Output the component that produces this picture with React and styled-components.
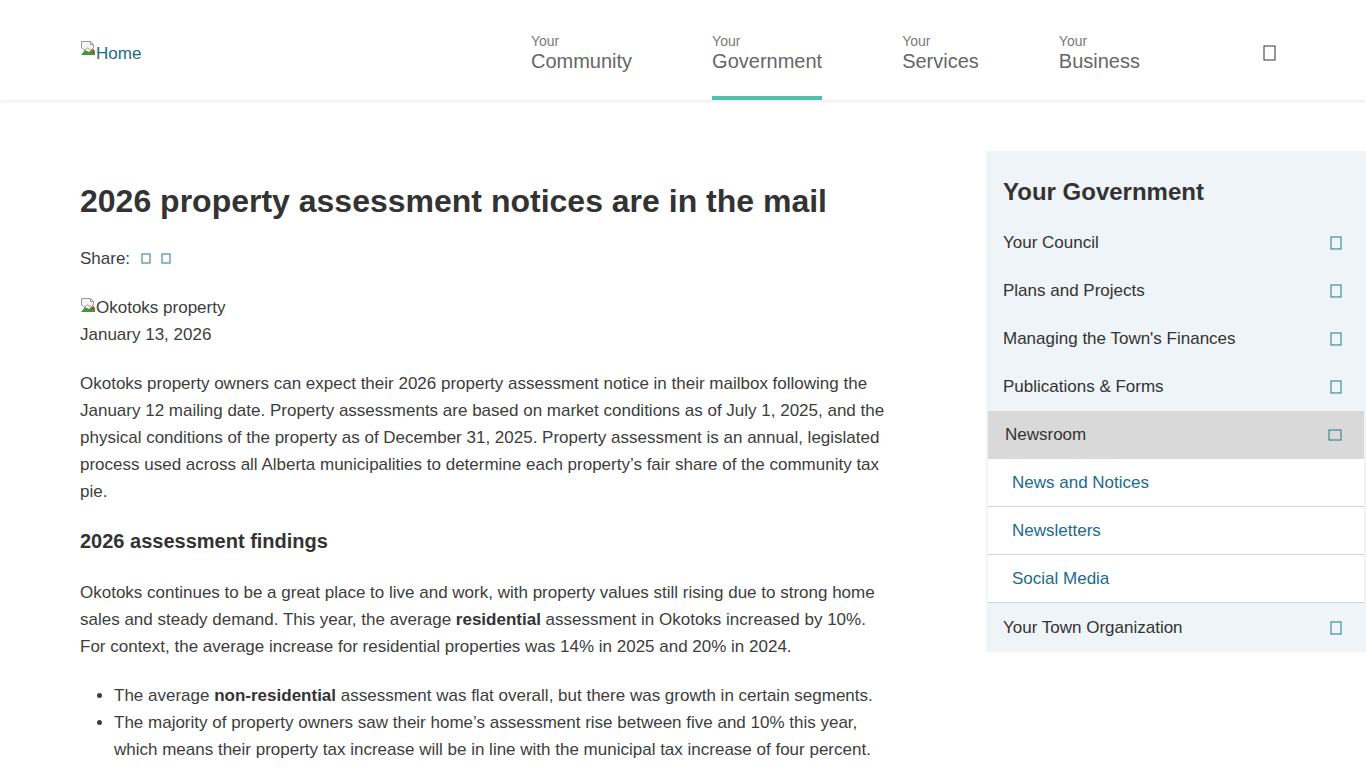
import React from "react";
import styled, { createGlobalStyle } from "styled-components";

const GlobalStyle = createGlobalStyle`
  body {
    margin: 0;
    background: #fff;
    font-family: "Liberation Sans", Arial, sans-serif;
    color: #3d3d3d;
  }
`;

const Header = styled.header`
  height: 100px;
  display: flex;
  align-items: stretch;
  justify-content: space-between;
  padding: 0 90px 0 80px;
  background: #fff;
  box-shadow: 0 2px 3px rgba(0, 0, 0, 0.07);
  position: relative;
  z-index: 1;
`;

const Logo = styled.a`
  display: flex;
  align-items: flex-end;
  align-self: flex-start;
  margin-top: 40px;
  color: #1c6b8c;
  font-size: 17px;
  line-height: 19px;
  text-decoration: none;
  svg {
    margin-bottom: 7px;
  }
`;

const Nav = styled.nav`
  display: flex;
  align-items: stretch;
`;

const NavList = styled.div`
  display: flex;
  gap: 80px;
  margin-right: 123px;
`;

const NavItem = styled.a`
  display: flex;
  flex-direction: column;
  padding-top: 33px;
  box-sizing: border-box;
  height: 100px;
  border-bottom: 4px solid ${(p) => (p.$active ? "#52c1ae" : "transparent")};
  text-decoration: none;
`;

const NavSmall = styled.span`
  font-size: 14px;
  line-height: 17px;
  color: #7a7a7a;
`;

const NavBig = styled.span`
  font-size: 20px;
  line-height: 22px;
  color: #666;
`;

const SearchBtn = styled.button`
  border: 0;
  background: none;
  padding: 0;
  align-self: flex-start;
  margin-top: 45px;
  display: flex;
`;

const Page = styled.div`
  display: grid;
  grid-template-columns: 810px 380px;
  column-gap: 96px;
  padding-left: 80px;
  margin-top: 51px;
`;

const Article = styled.article`
  font-size: 17px;
  line-height: 27px;
`;

const Title = styled.h1`
  font-size: 32px;
  line-height: 38px;
  font-weight: 700;
  color: #333;
  margin: 31px 0 25px;
`;

const Share = styled.div`
  display: flex;
  align-items: center;
  gap: 10px;
  margin-bottom: 22px;
  svg:first-of-type {
    margin-left: 1px;
  }
`;

const Figure = styled.div`
  margin-bottom: 22px;
`;

const Alt = styled.span`
  display: inline-flex;
  align-items: flex-end;
  svg {
    margin-bottom: 8px;
  }
`;

const Para = styled.p`
  margin: 0 0 23px;
  strong {
    font-weight: 700;
    color: #333;
  }
`;

const SubHead = styled.h3`
  font-size: 20px;
  line-height: 27px;
  font-weight: 700;
  color: #333;
  margin: 0 0 24px;
`;

const Bullets = styled.ul`
  margin: -1px 0 0;
  padding-left: 34px;
  strong {
    font-weight: 700;
    color: #333;
  }
`;

const Sidebar = styled.aside`
  background: #eef4f7;
  padding: 26px 2px 0 0;
  align-self: start;
`;

const SideTitle = styled.h2`
  font-size: 24px;
  line-height: 30px;
  font-weight: 700;
  color: #333;
  margin: 0 0 12px 17px;
`;

const SideItem = styled.a`
  display: flex;
  align-items: center;
  justify-content: space-between;
  height: ${(p) => (p.$last ? "49px" : "48px")};
  padding: 0 22px 0 17px;
  margin-left: ${(p) => (p.$active ? "2px" : "0")};
  background: ${(p) => (p.$active ? "#d9d9d9" : "transparent")};
  font-size: 17px;
  color: #333;
  text-decoration: none;
`;

const SubItem = styled.a`
  display: flex;
  align-items: center;
  height: 47px;
  margin-left: 2px;
  padding-left: 24px;
  background: #fff;
  border-bottom: 1px solid #cdd6da;
  font-size: 17px;
  color: #1c6b8c;
  text-decoration: none;
`;

const BrokenImage = () => (
  <svg width="16" height="16" viewBox="0 0 16 16">
    <path d="M1.5 1.5h9l3 3v3.5l-3 2-3-2-3 2-3-2z" fill="#f4f4f4" stroke="#9a9a9a" />
    <path d="M10.5 1.5v3h3" fill="none" stroke="#9a9a9a" />
    <path d="M1 15l4-5 4 2 4-3 2 2v4z" fill="#3f9a3a" />
    <path d="M9 12l5-3 1 5z" fill="#c33" opacity="0.6" />
  </svg>
);

const Box = ({ w = 10, h = 12, color = "#1c7a8e" }) => (
  <svg width={w + 2} height={h + 2} viewBox={`0 0 ${w + 2} ${h + 2}`}>
    <rect x="1" y="1" width={w} height={h} fill="none" stroke={color} strokeWidth="1" />
  </svg>
);

const navItems = [
  ["Your", "Community"],
  ["Your", "Government", true],
  ["Your", "Services"],
  ["Your", "Business"],
];

const sideItems = [
  "Your Council",
  "Plans and Projects",
  "Managing the Town's Finances",
  "Publications & Forms",
];

const App = () => (
  <>
    <GlobalStyle />
    <Header>
      <Logo href="#">
        <BrokenImage />
        Home
      </Logo>
      <Nav>
        <NavList>
          {navItems.map(([small, big, active]) => (
            <NavItem key={big} href="#" $active={active}>
              <NavSmall>{small}</NavSmall>
              <NavBig>{big}</NavBig>
            </NavItem>
          ))}
        </NavList>
        <SearchBtn aria-label="Search">
          <Box w={11} h={14} color="#333" />
        </SearchBtn>
      </Nav>
    </Header>

    <Page>
      <Article>
        <Title>2026 property assessment notices are in the mail</Title>
        <Share>
          Share:
          <Box w={8} h={9} />
          <Box w={8} h={9} />
        </Share>
        <Figure>
          <Alt>
            <BrokenImage />
            Okotoks property
          </Alt>
          <div>January 13, 2026</div>
        </Figure>
        <Para>
          Okotoks property owners can expect their 2026 property assessment notice in their mailbox
          following the January 12 mailing date. Property assessments are based on market conditions
          as of July 1, 2025, and the physical conditions of the property as of December 31, 2025.
          Property assessment is an annual, legislated process used across all Alberta
          municipalities to determine each property’s fair share of the community tax pie.
        </Para>
        <SubHead>2026 assessment findings</SubHead>
        <Para>
          Okotoks continues to be a great place to live and work, with property values still rising
          due to strong home sales and steady demand. This year, the average{" "}
          <strong>residential</strong> assessment in Okotoks increased by 10%. For context, the
          average increase for residential properties was 14% in 2025 and 20% in 2024.
        </Para>
        <Bullets>
          <li>
            The average <strong>non-residential</strong> assessment was flat overall, but there was
            growth in certain segments.
          </li>
          <li>
            The majority of property owners saw their home’s assessment rise between five and 10%
            this year, which means their property tax increase will be in line with the municipal
            tax increase of four percent.
          </li>
        </Bullets>
      </Article>

      <Sidebar>
        <SideTitle>Your Government</SideTitle>
        {sideItems.map((item) => (
          <SideItem key={item} href="#">
            {item}
            <Box />
          </SideItem>
        ))}
        <SideItem href="#" $active>
          Newsroom
          <Box w={12} h={10} />
        </SideItem>
        <SubItem href="#">News and Notices</SubItem>
        <SubItem href="#">Newsletters</SubItem>
        <SubItem href="#">Social Media</SubItem>
        <SideItem href="#" $last>
          Your Town Organization
          <Box />
        </SideItem>
      </Sidebar>
    </Page>
  </>
);

export default App;
